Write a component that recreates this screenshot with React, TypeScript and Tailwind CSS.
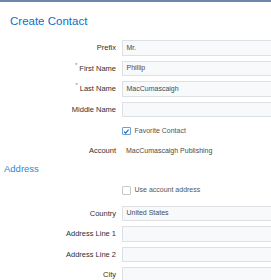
import React from 'react';

type Row = { label: string; value?: string; required?: boolean };

const nameRows: Row[] = [
  { label: 'Prefix', value: 'Mr.' },
  { label: 'First Name', value: 'Phillip', required: true },
  { label: 'Last Name', value: 'MacCumascaigh', required: true },
  { label: 'Middle Name', value: '' },
];

const addressRows: Row[] = [
  { label: 'Country', value: 'United States' },
  { label: 'Address Line 1', value: '' },
  { label: 'Address Line 2', value: '' },
  { label: 'City', value: '' },
];

function Label({ row }: { row: Row }) {
  return (
    <div className="flex items-start justify-end pr-[3px] text-[7.5px] text-[#2f2f2f]">
      {row.required && <span className="mr-[2px] -mt-[2px] text-[6px] text-[#5a7fa8]">*</span>}
      <span>{row.label}</span>
    </div>
  );
}

function InputRow({ row }: { row: Row }) {
  return (
    <div className="grid h-[20.5px] grid-cols-[119px_1fr] items-center">
      <Label row={row} />
      <div className="ml-[3px] flex h-[15.5px] items-center border border-r-0 border-[#dde1e6] bg-[#f8f9fb] pl-[3.5px] text-[7px] text-[#4a4a4a]">
        {row.value}
      </div>
    </div>
  );
}

function Checkbox({ checked, label }: { checked: boolean; label: string }) {
  return (
    <div className="ml-[122px] flex items-center gap-[4px] text-[7px] text-[#555]">
      <span
        className={`flex h-[8.5px] w-[8.5px] items-center justify-center rounded-[1px] border ${
          checked ? 'border-[#6a9fd8] bg-white' : 'border-[#c8c8c8] bg-white'
        }`}
      >
        {checked && (
          <svg viewBox="0 0 10 10" className="h-[7px] w-[7px]">
            <path d="M1.5 5.2 L4 7.6 L8.6 2.2" fill="none" stroke="#1565c0" strokeWidth="1.6" />
          </svg>
        )}
      </span>
      <span>{label}</span>
    </div>
  );
}

export default function App() {
  return (
    <div
      className="h-[280px] w-[271px] overflow-hidden border-t-2 border-[#6c87a8] bg-white"
      style={{ fontFamily: '"Liberation Sans", Arial, sans-serif' }}
    >
      <div className="flex h-[35.5px] items-center pl-[10px] pt-[3px] text-[11.5px] text-[#0a6fcc]">
        Create Contact
      </div>
      {nameRows.map((r) => (
        <InputRow key={r.label} row={r} />
      ))}
      <div className="flex h-[23px] items-center">
        <Checkbox checked label="Favorite Contact" />
      </div>
      <div className="grid h-[17px] grid-cols-[119px_1fr] items-center">
        <div className="pr-[3px] text-right text-[7.5px] text-[#2f2f2f]">Account</div>
        <div className="pl-[7px] text-[7px] text-[#4a4a4a]">MacCumascaigh Publishing</div>
      </div>
      <div className="flex h-[18.5px] items-center pl-[4px] text-[9.5px] text-[#2a88d8]">Address</div>
      <div className="flex h-[25px] items-center">
        <Checkbox checked={false} label="Use account address" />
      </div>
      {addressRows.map((r) => (
        <InputRow key={r.label} row={r} />
      ))}
    </div>
  );
}
